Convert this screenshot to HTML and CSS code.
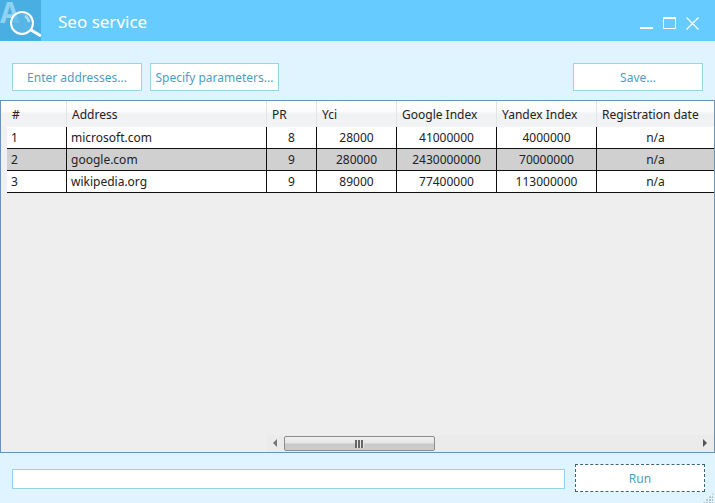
FILE: index.html
```html
<!DOCTYPE html>
<html lang="en">
<head>
<meta charset="utf-8">
<title>Seo service</title>
<link rel="stylesheet" href="styles.css">
</head>
<body>
<div class="window">
  <header class="titlebar">
    <div class="logo">
      <svg width="41" height="41" viewBox="0 0 41 41">
        <rect width="41" height="41" fill="#49aee2"/>
        <text x="0" y="23" class="logo-a">A</text>
        <circle cx="22" cy="23" r="11" fill="#5cb8e8" fill-opacity=".8"/>
        <path d="M25 16a8 8 0 0 1 4 6" fill="none" stroke="#a5dcf6" stroke-width="2.5"/>
        <circle cx="22" cy="23" r="11" fill="none" stroke="#fff" stroke-width="2"/>
        <path d="M31 30l10 6" fill="none" stroke="#fff" stroke-width="3"/>
      </svg>
    </div>
    <h1 class="title">Seo service</h1>
    <div class="controls">
      <svg width="13" height="13" viewBox="0 0 13 13"><path d="M0 11h13" stroke="#fff" stroke-width="2"/></svg>
      <svg width="13" height="13" viewBox="0 0 13 13"><path d="M.5.5h12v11H.5z" fill="none" stroke="#fff"/><path d="M0 1h13" stroke="#fff" stroke-width="2"/></svg>
      <svg width="13" height="13" viewBox="0 0 13 13"><path d="M.5.5l12 12M12.5.5l-12 12" stroke="#fff" stroke-width="1.2"/></svg>
    </div>
  </header>

  <div class="toolbar">
    <div class="group">
      <button class="btn">Enter addresses...</button>
      <button class="btn btn-params">Specify parameters...</button>
    </div>
    <button class="btn">Save...</button>
  </div>

  <main class="frame">
    <div class="grid">
      <div class="row head">
        <div class="gutter"></div>
        <div class="c c1">#</div><div class="c c2">Address</div><div class="c c3">PR</div><div class="c c4">Yci</div><div class="c c5">Google Index</div><div class="c c6">Yandex Index</div><div class="c c7">Registration date</div>
      </div>
      <div class="row">
        <div class="gutter"></div>
        <div class="c c1">1</div><div class="c c2">microsoft.com</div><div class="c c3 mid">8</div><div class="c c4 mid">28000</div><div class="c c5 mid">41000000</div><div class="c c6 mid">4000000</div><div class="c c7 mid">n/a</div>
      </div>
      <div class="row sel">
        <div class="gutter"></div>
        <div class="c c1">2</div><div class="c c2">google.com</div><div class="c c3 mid">9</div><div class="c c4 mid">280000</div><div class="c c5 mid">2430000000</div><div class="c c6 mid">70000000</div><div class="c c7 mid">n/a</div>
      </div>
      <div class="row">
        <div class="gutter"></div>
        <div class="c c1">3</div><div class="c c2">wikipedia.org</div><div class="c c3 mid">9</div><div class="c c4 mid">89000</div><div class="c c5 mid">77400000</div><div class="c c6 mid">113000000</div><div class="c c7 mid">n/a</div>
      </div>
    </div>
    <div class="hscroll">
      <span class="arrow arrow-left"></span>
      <div class="track">
        <div class="thumb"><span class="grip"></span></div>
      </div>
      <span class="arrow arrow-right"></span>
    </div>
  </main>

  <footer class="footer">
    <div class="progress"></div>
    <button class="btn btn-run">Run</button>
  </footer>
  <div class="resize"></div>
</div>
</body>
</html>
```
FILE: styles.css
```css
* { box-sizing: border-box; }
html, body { margin: 0; height: 100%; overflow: hidden; }
body { font-family: "Noto Sans", "Open Sans", sans-serif; font-size: 12px; color: #222; }
.window { position: relative; width: 715px; height: 503px; background: #e0f4ff; display: flex; flex-direction: column; }

.titlebar { height: 41px; background: #66ccff; display: flex; align-items: center; flex: none; }
.logo { width: 41px; height: 41px; flex: none; }
.logo svg { display: block; }
.logo-a { font-family: "Noto Sans", sans-serif; font-size: 28px; font-weight: 700; fill: #8fd3f4; }
.title { margin: 0 0 0 17px; font-size: 17px; font-weight: 400; color: #fff; flex: 1; position: relative; top: 1px; }
.controls { display: flex; gap: 10px; margin-right: 16px; margin-top: 6px; }
.controls svg { display: block; }

.toolbar { height: 59px; flex: none; padding: 22px 12px 9px; display: flex; justify-content: space-between; align-items: stretch; }
.group { display: flex; gap: 8px; }
.btn { width: 130px; height: 28px; padding: 0; background: #fff; border: 1px solid #9ad5e6; color: #4d9fbd; font: 12px "Noto Sans", sans-serif; }
.btn-params { width: 129px; }

.frame { height: 353px; flex: none; background: #eeeeee; border: 1px solid #6a93bb; display: flex; flex-direction: column; justify-content: space-between; }
.grid { display: flex; flex-direction: column; }
.row { display: flex; height: 22px; background: #fff; border-bottom: 1px solid #111; }
.row.sel { background: #d0d0d0; }
.row.head { height: 26px; background: linear-gradient(#fff 0, #fbfbfc 40%, #f0f1f2 50%, #f2f3f4); border-bottom: 0; }
.gutter { width: 6px; flex: none; background: #eef0f2; margin-bottom: -1px; }
.head .gutter { background: transparent; margin-bottom: 0; }
.c { height: 100%; padding: 0 4px; line-height: 21px; border-right: 1px solid #111; white-space: nowrap; overflow: hidden; flex: none; }
.head .c { border-right: 1px solid #e2e4e6; padding-left: 5px; line-height: 27px; }
.mid { text-align: center; }
.c1 { width: 60px; }
.c2 { width: 200px; }
.c3 { width: 50px; }
.c4 { width: 80px; }
.c5 { width: 100px; }
.c6 { width: 100px; }
.c7 { flex: 1; border-right: 0; }
.head .c7 { border-right: 0; }

.hscroll { height: 17px; margin-left: 266px; background: #ebebeb; display: flex; align-items: center; }
.arrow { width: 17px; flex: none; height: 9px; position: relative; }
.arrow::after { content: ""; position: absolute; top: 0; border: 4.5px solid transparent; }
.arrow-left::after { left: 6px; border-right: 4px solid #777; border-left: 0; }
.arrow-right::after { right: 7px; border-left: 4px solid #555; border-right: 0; }
.track { flex: 1; height: 100%; }
.thumb { width: 151px; height: 15px; margin-top: 1px; border: 1px solid #8c8c8c; border-radius: 2px; background: linear-gradient(#efefef 0, #e6e6e6 45%, #c8c8c8 55%, #cdcdcd); display: flex; align-items: center; justify-content: center; }
.grip { width: 9px; height: 8px; background: repeating-linear-gradient(90deg, #666 0 2px, #e8e8e8 2px 3px); }

.footer { flex: 1; padding: 11px 10px 11px 12px; display: flex; align-items: center; justify-content: space-between; }
.progress { width: 553px; height: 20px; margin-top: 2px; background: #fff; border: 1px solid #92d5e8; }
.btn-run { border: 1px dashed #35687c; }

.resize { position: absolute; right: 2px; bottom: 0; width: 10px; height: 10px; background: radial-gradient(circle at 1px 1px, #b4c4cc 1px, transparent 1.2px) 0 0 / 3px 3px; clip-path: polygon(100% 0, 100% 100%, 0 100%); }
```
